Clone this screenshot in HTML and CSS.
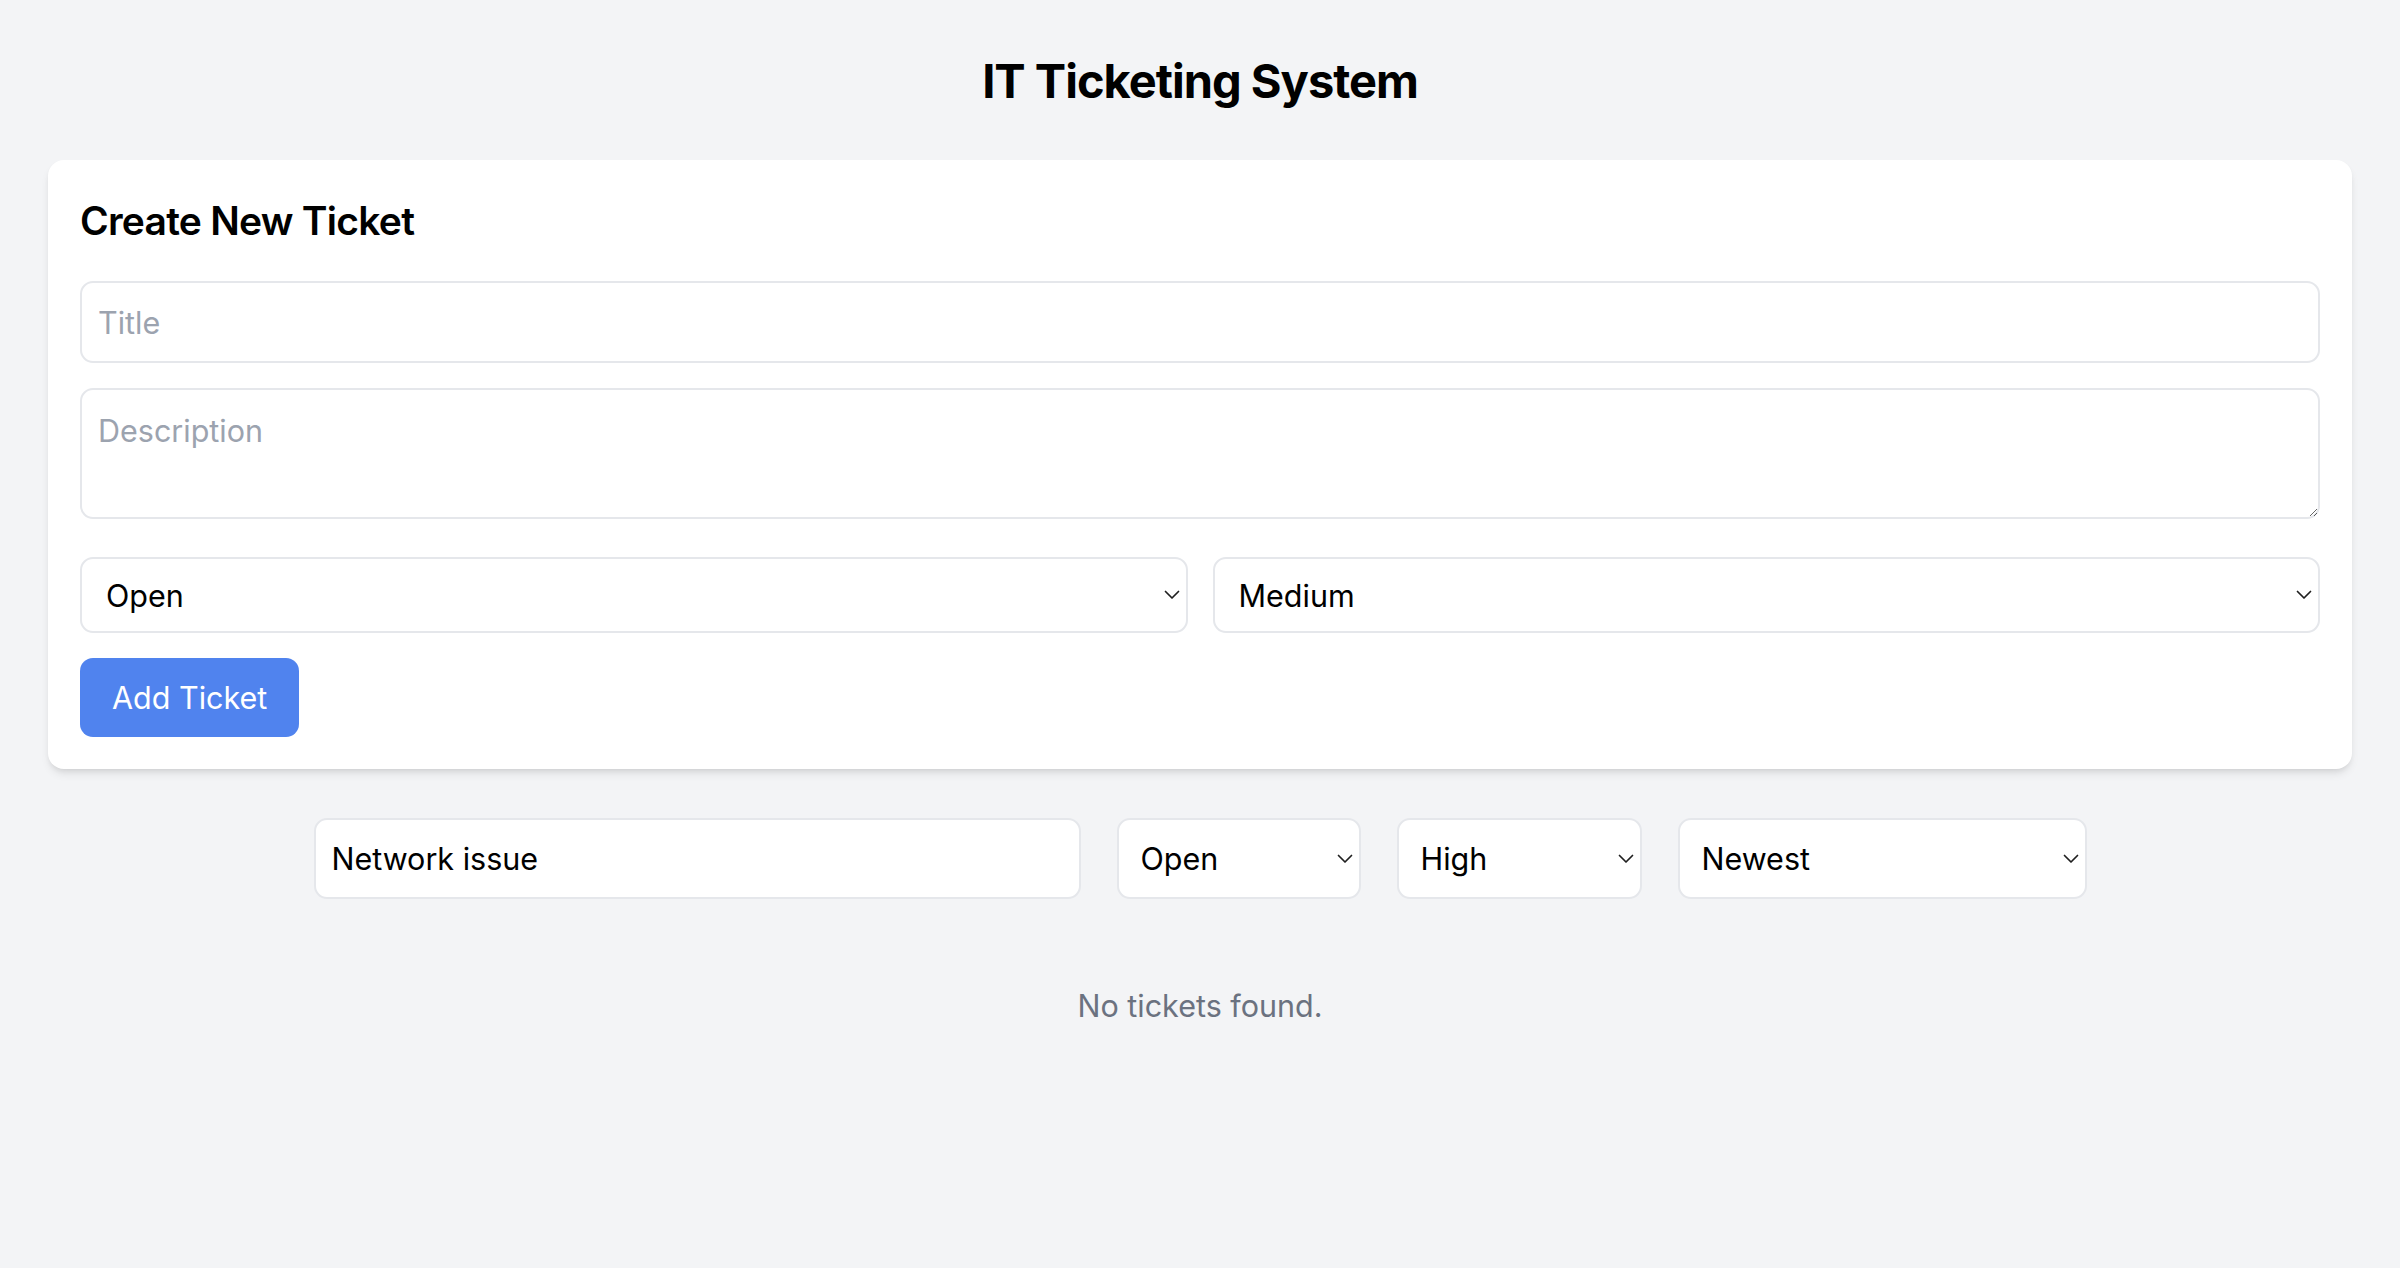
FILE: index.html
```html
<!DOCTYPE html>
<html lang="en">
<head>
<meta charset="utf-8">
<title>IT Ticketing System</title>
<link rel="stylesheet" href="styles.css">
</head>
<body>
<div class="page">
  <h1 class="page-title">IT Ticketing System</h1>

  <section class="card">
    <h2 class="card-title">Create New Ticket</h2>
    <form class="ticket-form">
      <input class="field field-input" type="text" placeholder="Title">
      <textarea class="field field-area" placeholder="Description"></textarea>
      <div class="select-row">
        <div class="select-wrap">
          <select class="field field-select">
            <option selected>Open</option>
            <option>In Progress</option>
            <option>Closed</option>
          </select>
          <svg class="chev" viewBox="0 0 16 10" width="16" height="10"><path d="M1.5 1.5 L8 8 L14.5 1.5" fill="none" stroke="#1f1f1f" stroke-width="1.7" stroke-linecap="round" stroke-linejoin="round"/></svg>
        </div>
        <div class="select-wrap">
          <select class="field field-select">
            <option>Low</option>
            <option selected>Medium</option>
            <option>High</option>
          </select>
          <svg class="chev" viewBox="0 0 16 10" width="16" height="10"><path d="M1.5 1.5 L8 8 L14.5 1.5" fill="none" stroke="#1f1f1f" stroke-width="1.7" stroke-linecap="round" stroke-linejoin="round"/></svg>
        </div>
      </div>
      <button class="btn" type="button">Add Ticket</button>
    </form>
  </section>

  <div class="filters">
    <input class="filter filter-search" type="text" value="Network issue">
    <div class="select-wrap filter-status">
      <select class="filter filter-select">
        <option>All</option>
        <option selected>Open</option>
        <option>Closed</option>
      </select>
      <svg class="chev" viewBox="0 0 16 10" width="16" height="10"><path d="M1.5 1.5 L8 8 L14.5 1.5" fill="none" stroke="#1f1f1f" stroke-width="1.7" stroke-linecap="round" stroke-linejoin="round"/></svg>
    </div>
    <div class="select-wrap filter-priority">
      <select class="filter filter-select">
        <option>All</option>
        <option selected>High</option>
        <option>Low</option>
      </select>
      <svg class="chev" viewBox="0 0 16 10" width="16" height="10"><path d="M1.5 1.5 L8 8 L14.5 1.5" fill="none" stroke="#1f1f1f" stroke-width="1.7" stroke-linecap="round" stroke-linejoin="round"/></svg>
    </div>
    <div class="select-wrap filter-sort">
      <select class="filter filter-select">
        <option selected>Newest</option>
        <option>Oldest</option>
      </select>
      <svg class="chev" viewBox="0 0 16 10" width="16" height="10"><path d="M1.5 1.5 L8 8 L14.5 1.5" fill="none" stroke="#1f1f1f" stroke-width="1.7" stroke-linecap="round" stroke-linejoin="round"/></svg>
    </div>
  </div>

  <p class="empty">No tickets found.</p>
</div>
</body>
</html>
```

FILE: styles.css
```css
* {
  box-sizing: border-box;
}

body {
  margin: 0;
  background: #f3f4f6;
  font-family: Inter, "Noto Sans", "Liberation Sans", sans-serif;
  color: #000;
}

.page {
  padding: 52px 48px 40px;
}

.page-title {
  margin: 0 0 50px;
  font-size: 47px;
  line-height: 58px;
  font-weight: 700;
  text-align: center;
  letter-spacing: -1px;
}

.card {
  background: #fff;
  border-radius: 16px;
  padding: 35px 32px 32px;
  box-shadow: 0 6px 10px -2px rgba(0, 0, 0, 0.1), 0 3px 6px -3px rgba(0, 0, 0, 0.1);
}

.card-title {
  margin: 0 0 34px;
  font-size: 39px;
  line-height: 52px;
  font-weight: 600;
  letter-spacing: -0.75px;
}

.ticket-form {
  display: flex;
  flex-direction: column;
  gap: 25px;
}

.field,
.filter {
  font-family: inherit;
  font-size: 30.5px;
  color: #000;
  background: #fff;
  border: 2px solid #e5e7eb;
  border-radius: 13px;
  outline: none;
  width: 100%;
  margin: 0;
}

.field::placeholder {
  color: #9ca3af;
}

.field-input {
  height: 82px;
  padding: 0 16px;
}

.field-area {
  display: block;
  height: 131px;
  padding: 23px 16px;
  line-height: 36px;
  resize: vertical;
}

.select-row {
  margin-top: 13px;
  display: grid;
  grid-template-columns: 1fr 1fr;
  gap: 25px;
}

.select-wrap {
  position: relative;
}

.field-select {
  appearance: none;
  -webkit-appearance: none;
  height: 76px;
  padding: 0 40px 0 24px;
}

.chev {
  position: absolute;
  right: 8px;
  top: 50%;
  transform: translateY(-50%);
  pointer-events: none;
}

.btn {
  align-self: flex-start;
  height: 79px;
  padding: 0 32px;
  border: none;
  border-radius: 13px;
  background: #5083ee;
  color: #fff;
  font-family: inherit;
  font-size: 30.5px;
  cursor: pointer;
}

.filters {
  margin-top: 49px;
  display: flex;
  justify-content: center;
  gap: 36px;
}

.filter {
  height: 81px;
}

.filter-search {
  width: 767px;
  padding: 0 16px;
}

.filter-select {
  appearance: none;
  -webkit-appearance: none;
  padding: 0 36px 0 22px;
}

.filter-status {
  width: 244px;
}

.filter-priority {
  width: 245px;
}

.filter-sort {
  width: 409px;
}

.empty {
  margin: 87px 0 0;
  font-size: 30.5px;
  line-height: 40px;
  color: #6b7280;
  text-align: center;
}
```
